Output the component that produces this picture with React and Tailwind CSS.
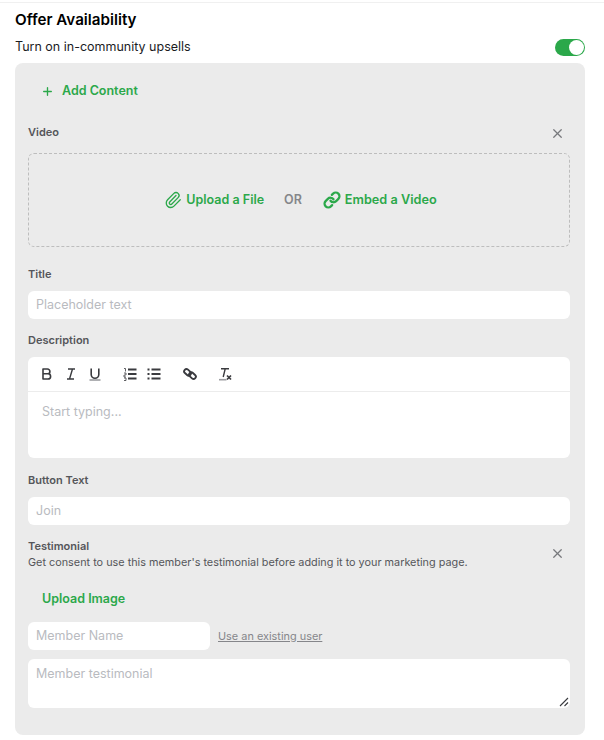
import { Plus, X, Paperclip, Link as LinkIcon } from "lucide-react";

function FieldLabel({ children }) {
    return <div className="text-[11px] leading-[14px] font-semibold text-[#55565a]">{children}</div>;
}

function TextInput({ placeholder, className = "w-full" }) {
    return (
        <input
            className={`h-[28px] rounded-md bg-white px-2 pb-[1px] text-[12.5px] text-gray-700 outline-none placeholder:text-[#b9bbbf] ${className}`}
            placeholder={placeholder}
        />
    );
}

// toolbar glyphs, drawn to match the editor's heavier icon set
function ToolIcon({ children, className = "" }) {
    return (
        <svg viewBox="0 0 14 14" width="14" height="14" fill="none" stroke="#3a3b3f" strokeWidth="1.6" className={className}>
            {children}
        </svg>
    );
}

function Toolbar() {
    return (
        <div className="flex h-[35px] items-center border-b border-[#ececec] pl-[12px]">
            <ToolIcon>
                <path d="M3 2h4.5a2.4 2.4 0 0 1 0 4.8H3zM3 6.8h5a2.6 2.6 0 0 1 0 5.2H3z" strokeLinejoin="round" />
            </ToolIcon>
            <ToolIcon className="ml-[10px]">
                <path d="M4 2h7M3 12h7M8.5 2l-3 10" strokeWidth="1.4" />
            </ToolIcon>
            <ToolIcon className="ml-[10px]">
                <path d="M3.2 1.5v6a3.8 3.8 0 0 0 7.6 0v-6" />
                <path d="M1.5 13h11" stroke="#9c9da1" />
            </ToolIcon>
            <ToolIcon className="ml-[21px]">
                <path d="M5 2.5h8.5M5 7h8.5M5 11.5h8.5" strokeWidth="2" />
                <path d="M1 1.5h1.5v3M1 6h2v2H1v2h2M1 11h2v2.5H1" strokeWidth=".8" />
            </ToolIcon>
            <ToolIcon className="ml-[10px]">
                <path d="M4.5 2.5h9M4.5 7h9M4.5 11.5h9" strokeWidth="2" />
                <path d="M.5 2.5h2M.5 7h2M.5 11.5h2" strokeWidth="2" />
            </ToolIcon>
            <ToolIcon className="ml-[22px]">
                <g strokeWidth="1.9">
                    <rect x="0.8" y="3" width="7.5" height="4.6" rx="2.3" transform="rotate(42 4.5 5.3)" />
                    <rect x="5.7" y="6.4" width="7.5" height="4.6" rx="2.3" transform="rotate(42 9.5 8.7)" />
                </g>
            </ToolIcon>
            <ToolIcon className="ml-[21px]">
                <path d="M3 1.8h8M7.2 1.8L5.2 10" strokeWidth="1.4" />
                <path d="M1 12.7h7.5" stroke="#9c9da1" />
                <path d="M9 8.5l4 4M13 8.5l-4 4" strokeWidth="1.7" />
            </ToolIcon>
        </div>
    );
}

export default function App() {
    return (
        <div className="h-[740px] w-[604px] overflow-hidden bg-white font-['Inter',sans-serif]">
            <div className="mt-[2px] h-[1px] bg-[#f0f0f0]"></div>
            <div className="pl-[15px] pr-[19px] pt-[8px]">
                <h2 className="text-[15.2px] leading-[18px] font-semibold text-black">Offer Availability</h2>

                <div className="mt-[9px] flex h-[18px] items-center justify-between">
                    <span className="text-[12.5px] text-[#1c1c1f]">Turn on in-community upsells</span>
                    <div className="flex h-[17px] w-[30px] items-center justify-end rounded-full bg-[#2ba84a] pr-[1px]">
                        <div className="h-[15px] w-[15px] rounded-full bg-white"></div>
                    </div>
                </div>

                <div className="mt-[7px] h-[672px] rounded-lg bg-[#ebebeb] pl-[13px] pr-[15px]">
                    <div className="flex h-[56px] items-center gap-[8px] pl-[13px] text-[#2ba84a]">
                        <Plus size={13} strokeWidth={2.5} />
                        <span className="text-[12.5px] font-semibold">Add Content</span>
                    </div>

                    <div className="mt-[6px] flex items-start justify-between pr-[5px]">
                        <FieldLabel>Video</FieldLabel>
                        <X size={15} className="mt-[1px] text-[#77787c]" />
                    </div>

                    <div className="mt-[12px] flex h-[94px] items-center justify-center rounded-md border border-dashed border-[#bdbdbd] pl-[3px]">
                        <Paperclip size={18} strokeWidth={1.75} className="text-[#2ba84a]" />
                        <span className="ml-[4px] text-[12.5px] font-semibold text-[#2ba84a]">Upload a File</span>
                        <span className="ml-[20px] mr-[21px] text-[12.5px] font-semibold text-[#85868a]">OR</span>
                        <LinkIcon size={18} strokeWidth={3} className="text-[#2ba84a]" />
                        <span className="ml-[4px] text-[12.7px] font-semibold text-[#2ba84a]">Embed a Video</span>
                    </div>

                    <div className="mt-[20px]"><FieldLabel>Title</FieldLabel></div>
                    <div className="mt-[10px]"><TextInput placeholder="Placeholder text" /></div>

                    <div className="mt-[14px]"><FieldLabel>Description</FieldLabel></div>
                    <div className="mt-[10px] h-[101px] rounded-md bg-white">
                        <Toolbar />
                        <div className="pl-[14px] pt-[12px] text-[12.5px] leading-[16px] text-[#b9bbbf]">Start typing...</div>
                    </div>

                    <div className="mt-[15px]"><FieldLabel>Button Text</FieldLabel></div>
                    <div className="mt-[10px]"><TextInput placeholder="Join" /></div>

                    <div className="mt-[14px] flex items-center justify-between pr-[5px]">
                        <div>
                            <FieldLabel>Testimonial</FieldLabel>
                            <p className="mt-[2px] text-[10.85px] leading-[15px] text-[#55565a]">Get consent to use this member's testimonial before adding it to your marketing page.</p>
                        </div>
                        <X size={15} className="mb-[3px] text-[#77787c]" />
                    </div>

                    <div className="mt-[21px] pl-[14px] text-[12.5px] leading-[16px] font-semibold text-[#2ba84a]">Upload Image</div>

                    <div className="mt-[15px] flex items-center gap-[8px]">
                        <TextInput placeholder="Member Name" className="w-[182px]" />
                        <a className="text-[10.9px] text-[#85868a] underline">Use an existing user</a>
                    </div>

                    <div className="relative mt-[9px]">
                        <textarea
                            className="block h-[49px] w-full resize-none rounded-md bg-white px-2 py-[7px] text-[12.5px] leading-[16px] outline-none placeholder:text-[#b9bbbf]"
                            placeholder="Member testimonial"
                        ></textarea>
                        <svg viewBox="0 0 10 10" width="10" height="10" stroke="#3a3b3f" strokeWidth="1.1" className="absolute bottom-[1px] right-[1px]">
                            <path d="M1 9L9 1M5.5 9L9 5.5" />
                        </svg>
                    </div>
                </div>
            </div>
        </div>
    );
}
